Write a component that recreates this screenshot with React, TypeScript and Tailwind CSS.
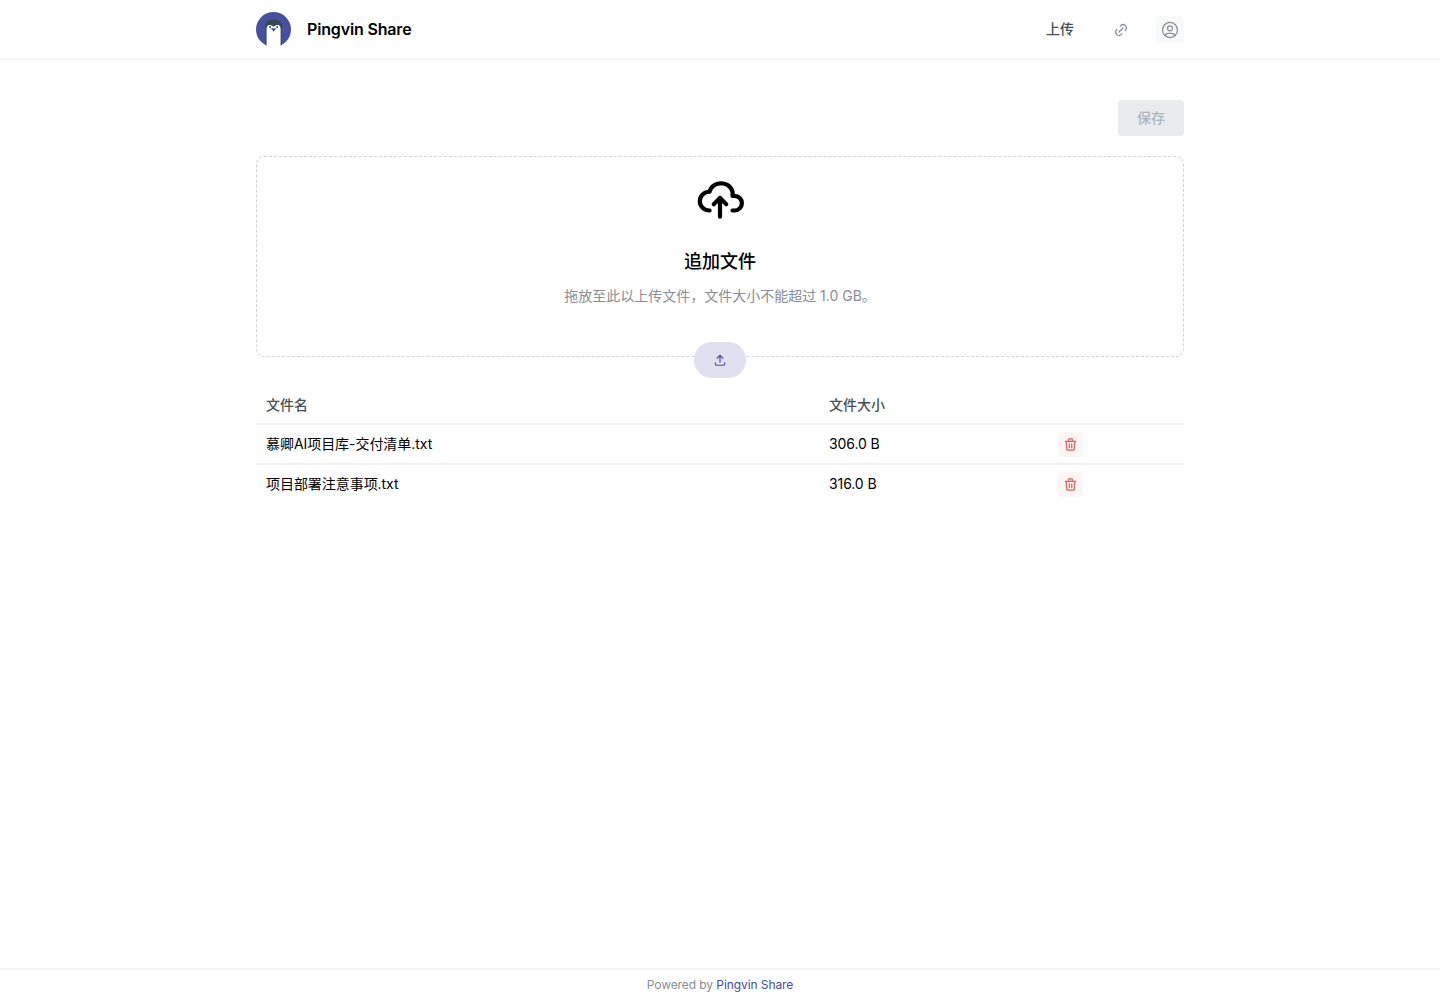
import type { ReactNode } from 'react';
import { TbCloudUpload, TbLink, TbTrash, TbUpload, TbUserCircle } from 'react-icons/tb';

const FILES = [
  { name: '慕卿AI项目库-交付清单.txt', size: '306.0 B' },
  { name: '项目部署注意事项.txt', size: '316.0 B' },
];

function Logo() {
  return (
    <svg width="35" height="35" viewBox="0 0 35 35" aria-hidden="true">
      <circle cx="17.5" cy="17.5" r="17.5" fill="#46509e" />
      <path d="M9.6 33V16a8 8.6 0 0 1 16 0v17a17.5 17.5 0 0 1-1.2.6H10.8z" fill="#37474f" />
      <path d="M10.6 35V17c0-2.6 1.4-4.2 3.2-4.2 1.4 0 2.800.8 3.800 2 1-1.200 2.400-2 3.800-2 1.800 0 3.200 1.600 3.200 4.200V35z" fill="#fff" />
      <path
        d="M8.6 16.2a9 9 0 0 1 18 0c-.6-1.8-1.7-3.2-3.6-3.4-2-.2-3.8.6-5.4 1.8-1.6-1.2-3.4-2-5.4-1.8-1.9.2-3 1.6-3.6 3.4z"
        fill="#37474f"
      />
      <circle cx="14.1" cy="15" r="1" fill="#37474f" />
      <circle cx="21.1" cy="15" r="1" fill="#37474f" />
      <path d="M14.8 16.3h5.6l-2.8 3.4z" fill="#46509e" />
    </svg>
  );
}

export default function App() {
  return (
    <div className="flex h-screen flex-col bg-white font-[Inter,'Noto_Sans_CJK_SC',sans-serif] text-sm text-black">
      <header className="h-[60px] shrink-0 border-b border-[#e9ecef]">
        <div className="mx-auto flex h-[59px] w-[928px] items-center justify-between">
          <div className="flex items-center gap-4">
            <Logo />
            <span className="pb-0.5 text-base font-semibold tracking-[-0.16px]">Pingvin Share</span>
          </div>
          <nav className="flex items-center">
            <a className="mr-[33px] pb-0.5 font-medium text-[#495057]">上传</a>
            <button className="mr-[21px] flex size-7 items-center justify-center text-[#868e96]" aria-label="Link">
              <TbLink size={16} />
            </button>
            <button
              className="flex h-[27px] w-7 items-center justify-center rounded bg-[#f8f9fa] text-[#868e96]"
              aria-label="Account"
            >
              <TbUserCircle size={20} strokeWidth={1.5} />
            </button>
          </nav>
        </div>
      </header>

      <main className="mx-auto w-[928px] flex-1 pt-10">
        <div className="flex justify-end">
          <button className="h-9 w-[66px] rounded bg-[#e9ebee] font-medium text-[#adb5bd]" disabled>
            保存
          </button>
        </div>

        <div className="mt-5 flex h-[201px] flex-col items-center rounded-lg border border-dashed border-[#ced4da] pt-4">
          <TbCloudUpload size={50} />
          <p className="mt-[25px] text-lg leading-7 font-medium">追加文件</p>
          <p className="mt-[9px] leading-[22px] text-[#868e96]">拖放至此以上传文件，文件大小不能超过 1.0 GB。</p>
        </div>
        <div className="relative -mt-[15.5px] flex justify-center">
          <button
            className="flex h-9 w-[52px] items-center justify-center rounded-full bg-[#e0e0f0] text-[#4549a8]"
            aria-label="Upload"
          >
            <TbUpload size={14} />
          </button>
        </div>

        <table className="mt-[10.5px] w-full table-fixed border-collapse">
          <colgroup>
            <col className="w-[563px]" />
            <col className="w-[229px]" />
            <col />
          </colgroup>
          <thead>
            <tr className="h-9 text-left text-[#495057]">
              <Th>文件名</Th>
              <Th>文件大小</Th>
              <th />
            </tr>
          </thead>
          <tbody>
            {FILES.map((file) => (
              <tr key={file.name} className="h-10 border-t-2 border-[#f1f1f2] last:h-[39px]">
                <td className="px-2.5 tracking-[-0.05px]">{file.name}</td>
                <td className="px-2.5 tracking-[-0.1px]">{file.size}</td>
                <td className="px-2.5">
                  <button
                    className="flex size-[25px] items-center justify-center rounded bg-[#fff5f5] text-[#d9605c]"
                    aria-label="Delete"
                  >
                    <TbTrash size={15} />
                  </button>
                </td>
              </tr>
            ))}
          </tbody>
        </table>
      </main>

      <footer className="flex h-8 shrink-0 items-center justify-center border-t-2 border-[#f4f4f5] text-xs text-[#868e96]">
        <span className="tracking-[-0.08px]">
          Powered by <a className="text-[#4549a8]">Pingvin Share</a>
        </span>
      </footer>
    </div>
  );
}

function Th({ children }: { children: ReactNode }) {
  return <th className="px-2.5 pb-px font-medium">{children}</th>;
}
